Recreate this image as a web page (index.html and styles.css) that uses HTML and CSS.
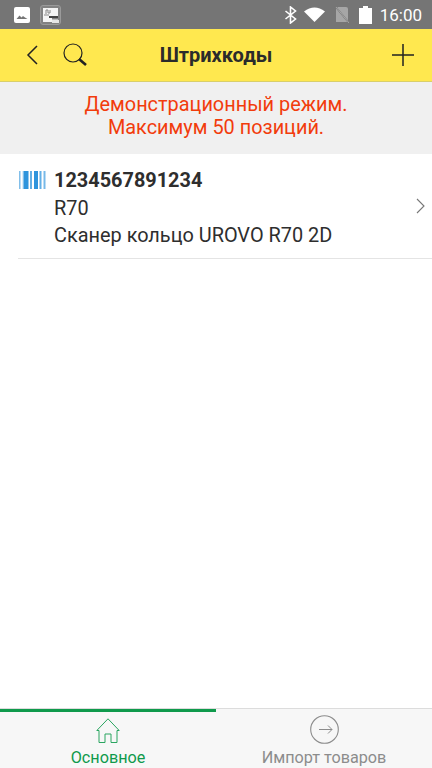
FILE: index.html
```html
<!DOCTYPE html>
<html lang="ru">
<head>
<meta charset="utf-8">
<title>Штрихкоды</title>
<link rel="stylesheet" href="styles.css">
</head>
<body>
<div class="app">
  <div class="status">
    <div class="status-left">
      <svg class="ic-photo" width="16" height="16" viewBox="0 0 16 16"><rect width="16" height="16" rx="2" fill="#fff"/><path d="M2.5 12l3-3.5 2 2 1.5-1.5 2 1.5 2.5 1.5z" fill="#757575"/></svg>
      <svg class="ic-app" width="21" height="20" viewBox="0 0 21 20"><rect x="0.5" y="0.5" width="20" height="19" rx="2.5" fill="#828282" stroke="#9a9a9a"/><rect x="3" y="3" width="15" height="14" fill="#f4f4f4"/><path d="M6 9V5h2v3h2V5M4 10h5" stroke="#888" fill="none"/><rect x="9" y="11" width="9" height="2" fill="#444"/><rect x="12" y="13" width="7" height="1.5" fill="#828282"/><rect x="12" y="15" width="7" height="3" fill="#e6e6e6"/></svg>
    </div>
    <div class="status-right">
      <svg class="ic-bt" width="13" height="18" viewBox="0 0 13 18"><path d="M1.500 5l10 8-5 4V1l5 4-10 8" fill="none" stroke="#fff" stroke-width="1.600"/></svg>
      <svg class="ic-wifi" width="21" height="15" viewBox="0 0 21 15"><path d="M0 4.500Q10.500-3.500 21 4.500L10.500 15z" fill="#fff"/></svg>
      <svg class="ic-sim" width="15" height="17" viewBox="0 0 15 17"><path d="M4 1h8a2 2 0 0 1 2 2v13H2V3z" fill="#a6a6a6"/><path d="M1 0l14 17" stroke="#757575" stroke-width="1.500"/><path d="M2 1l13 16" stroke="#a6a6a6"/></svg>
      <svg class="ic-batt" width="13" height="18" viewBox="0 0 13 18"><path d="M4 0h5v2h4v16H0V2h4z" fill="#fff"/></svg>
      <span class="clock">16:00</span>
    </div>
  </div>
  <header class="topbar">
    <div class="topbar-left">
      <svg width="12" height="20" viewBox="0 0 12 20"><path d="M11 1L2 10l9 9" fill="none" stroke="#222" stroke-width="1.500"/></svg>
      <svg width="24" height="24" viewBox="0 0 24 24"><circle cx="10" cy="10" r="9" fill="none" stroke="#222" stroke-width="1.200"/><path d="M16 16l7 6" stroke="#222" stroke-width="2.600"/></svg>
    </div>
    <h1 class="title">Штрихкоды</h1>
    <svg class="plus" width="22" height="22" viewBox="0 0 22 22"><path d="M11 0v22M0 11h22" stroke="#222" stroke-width="1.500"/></svg>
  </header>
  <div class="banner">Демонстрационный режим.<br>Максимум 50 позиций.</div>
  <main class="list">
    <div class="row">
      <svg class="barcode" width="27" height="18" viewBox="0 0 27 18"><g fill="#2e94dc"><rect x="0" width="1.500" height="18" opacity=".6"/><rect x="3.500" width="1" height="18" opacity=".35"/><rect x="4.500" width="5" height="18"/><rect x="11" width="2" height="18" opacity=".75"/><rect x="15" width="4" height="18"/><rect x="20.500" width="2" height="18" opacity=".75"/><rect x="24.500" width="2" height="18" opacity=".65"/></g></svg>
      <div class="row-text">
        <div class="code">1234567891234</div>
        <div class="line">R70</div>
        <div class="line">Сканер кольцо UROVO R70 2D</div>
      </div>
      <svg class="chevron" width="9" height="16" viewBox="0 0 9 16"><path d="M1 1l7 7-7 7" fill="none" stroke="#777" stroke-width="1.100"/></svg>
    </div>
  </main>
  <nav class="tabs">
    <div class="tab tab-active">
      <span class="tab-icon"><svg class="ic-home" width="24" height="25" viewBox="0 0 24 25"><path d="M3 24.500V12.500H.8L12 .8 23.200 12.500H21V24.500H15V16H9V24.500z" fill="none" stroke="#2aa560" stroke-width="1"/></svg></span>
      <span class="tab-label">Основное</span>
    </div>
    <div class="tab">
      <span class="tab-icon"><svg width="29" height="29" viewBox="0 0 29 29"><circle cx="14.500" cy="14.500" r="13.800" fill="none" stroke="#8c8c8c" stroke-width="1.100"/><path d="M9 14.500h13M18 10.500l4 4-4 4" fill="none" stroke="#8c8c8c" stroke-width="1"/></svg></span>
      <span class="tab-label">Импорт товаров</span>
    </div>
  </nav>
</div>
</body>
</html>
```
FILE: styles.css
```css
* { box-sizing: border-box; }
html, body { margin: 0; padding: 0; }
body { font-family: Roboto, "Liberation Sans", sans-serif; background: #fff; }
.app { width: 432px; height: 768px; display: flex; flex-direction: column; overflow: hidden; }

.status { height: 29px; flex: none; background: #757575; display: flex; justify-content: space-between; align-items: center; padding: 0 10px 0 14px; }
.status-left { display: flex; align-items: center; gap: 10px; }
.status-right { display: flex; align-items: center; gap: 9px; }
.ic-bt { margin-right: -2px; }
.ic-sim { margin-right: 1px; }
.ic-batt { margin-right: -1px; }
.clock { color: #fff; font-size: 17px; }

.topbar { height: 53px; flex: none; background: #ffe84f; border-bottom: 1px solid #d9cf6a; display: grid; grid-template-columns: 1fr auto 1fr; align-items: center; padding: 0 18px; }
.topbar-left { display: flex; align-items: center; gap: 25px; margin-left: 8px; }
.title { margin: 0; font-size: 20px; font-weight: 700; color: #2b2b2b; }
.plus { justify-self: end; }

.banner { height: 72px; flex: none; background: #f0f0f0; color: #f23c0c; font-size: 19.900px; line-height: 23px; text-align: center; padding-top: 11px; }

.list { flex: 1; background: #fff; padding: 0 0 0 18px; }
.row { height: 105px; display: flex; align-items: flex-start; border-bottom: 1px solid #e4e4e4; padding: 13px 0 0 1px; }
.barcode { flex: none; margin: 4px 8px 0 0; }
.row-text { flex: 1; color: #2e2e2e; font-size: 19.900px; line-height: 27.500px; }
.code { font-weight: 700; }
.chevron { flex: none; margin: 31px 7px 0 0; }

.tabs { height: 60px; flex: none; background: #f7f7f7; display: grid; grid-template-columns: 1fr 1fr; border-top: 1px solid #dcdcdc; }
.tab { display: flex; flex-direction: column; align-items: center; color: #8c8c8c; border-top: 3px solid transparent; }
.tab-active { color: #0f9a4c; border-top-color: #0f9a4c; }
.tab-icon { height: 34px; display: flex; align-items: center; justify-content: center; }
.ic-home { margin-top: 2px; }
.tab-label { font-size: 16.200px; line-height: 20px; margin-top: 2px; white-space: nowrap; }
```
